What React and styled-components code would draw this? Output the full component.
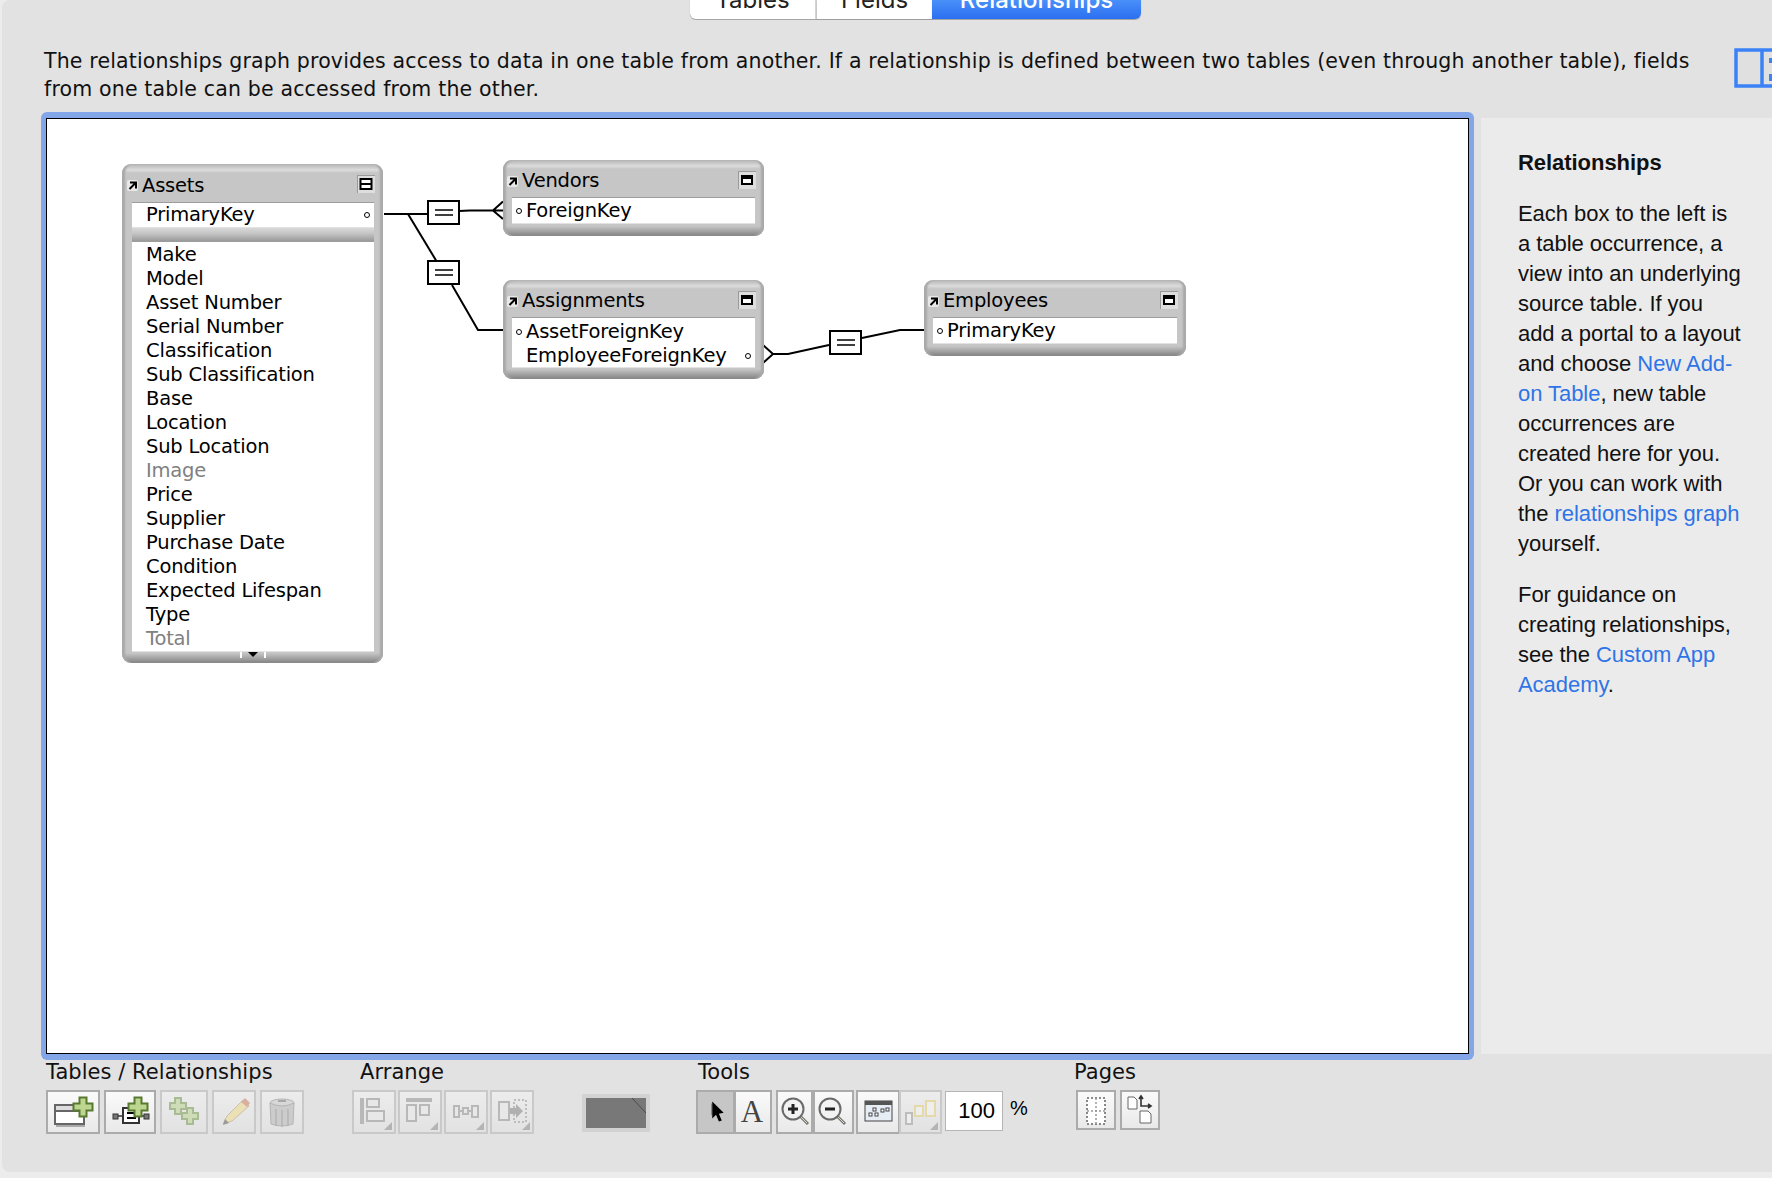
import styled, { createGlobalStyle } from 'styled-components';

const Global = createGlobalStyle`
    html, body {
        margin: 0;
        padding: 0;
        background: #ececec;
    }
`
const GRAPH_FONT = `"DejaVu Sans", "Liberation Sans", sans-serif`;
const HELP_FONT = `"Liberation Sans", Arial, sans-serif`;

const Shell = styled.div`
    width: 1772px;
    height: 1178px;
    overflow: hidden;
    box-sizing: border-box;
    padding: 0 0 6px 2px;
    background: #ececec;
`
const Page = styled.div`
    height: 100%;
    display: flex;
    flex-direction: column;
    background: #e2e2e2;
    border-radius: 8px 0 0 8px;
    color: #000;
`
const TabBar = styled.div`
    height: 20px;
    display: flex;
    align-items: flex-start;
    padding-left: 688px;
    overflow: hidden;
    flex-shrink: 0;
`
const Tab = styled.div`
    width: ${p => p.$w}px;
    height: 19px;
    box-sizing: border-box;
    display: flex;
    align-items: flex-end;
    justify-content: center;
    font: ${p => p.$active ? 500 : 400} 24px/28px Inter, ${HELP_FONT};
    color: ${p => p.$active ? '#fff' : '#222'};
    background: ${p => p.$active ? 'linear-gradient(#4a90fa, #2a6ff0)' : '#fff'};
    border-right: ${p => p.$first ? '2px solid #d4d4d4' : 0};
    border-radius: 0 0 ${p => p.$active ? 6 : 0}px ${p => p.$first ? 6 : 0}px;
    box-shadow: 0 1px 1px rgba(0, 0, 0, 0.3);
    padding-bottom: 5px;
`
const IntroRow = styled.div`
    height: 92px;
    display: flex;
    padding-left: 42px;
    flex-shrink: 0;
`
const Intro = styled.div`
    width: 1690px;
    margin-top: 27px;
    font: 20.5px/28px ${GRAPH_FONT};
    letter-spacing: 0.165px;
    white-space: nowrap;
    color: #111;
`
const SplitToggle = styled.div`
    margin-top: 28px;
    width: 38px;
    height: 40px;
    flex-shrink: 0;
`
const MainRow = styled.div`
    display: flex;
    padding-left: 39px;
    height: 948px;
    flex-shrink: 0;
`
const CanvasFrame = styled.div`
    width: 1433px;
    box-sizing: border-box;
    padding: 6px 5px;
    background: #82a6e8;
    border-radius: 6px;
    display: flex;
`
const Canvas = styled.div`
    flex: 1;
    position: relative;
    background: #fff;
    border: 1px solid #000;
`
const Links = styled.svg`
    position: absolute;
    left: 0;
    top: 0;
`
const Node = styled.div`
    position: absolute;
    left: ${p => p.$x}px;
    top: ${p => p.$y}px;
    width: ${p => p.$w}px;
    height: ${p => p.$h}px;
    box-sizing: border-box;
    padding: 0 9px 0 ${p => p.$pl || 9}px;
    display: flex;
    flex-direction: column;
    border-radius: 9px;
    background: linear-gradient(#b4b4b4 0, #dcdcdc 6px, #c6c6c6 9px, #c6c6c6 calc(100% - 10px), #828282 100%);
    box-shadow: inset 4px 0 2px -1px #a9a9a9, inset -4px 0 2px -1px #a9a9a9;
    font: 19.5px ${GRAPH_FONT};
    letter-spacing: -0.2px;
`
const TitleBar = styled.div`
    height: ${p => p.$h}px;
    flex-shrink: 0;
    margin: 0 -1px 0 -5px;
    padding-top: ${p => p.$pad}px;
    box-sizing: border-box;
    display: flex;
    align-items: center;
    gap: 4px;
`
const TitleText = styled.span`
    flex: 1;
    line-height: 22px;
`
const CollapseBox = styled.svg`
    flex-shrink: 0;
    margin-top: -3px;
`
const FieldBox = styled.div`
    background: #fff;
    box-sizing: border-box;
    height: ${p => p.$h}px;
    flex-shrink: 0;
    padding-top: ${p => p.$pad || 0}px;
    border-top: 1px solid #9d9d9d;
    border-bottom: 1px solid #e2e2e2;
`
const Row = styled.div`
    height: 24px;
    line-height: 24px;
    display: flex;
    align-items: center;
    color: ${p => p.$muted ? '#808080' : '#000'};
`
const DotSlot = styled.div`
    width: 14px;
    flex-shrink: 0;
    display: flex;
    justify-content: center;
    padding-right: 1px;
    box-sizing: border-box;
`
const Dot = styled.span`
    width: 6px;
    height: 6px;
    box-sizing: border-box;
    border: 1.6px solid #000;
    border-radius: 50%;
    display: block;
    margin-right: ${p => p.$right ? 4 : 0}px;
    margin-left: ${p => p.$right ? 'auto' : 0};
`
const Divider = styled.div`
    height: 13px;
    flex-shrink: 0;
    background: linear-gradient(#d8d8d8 0, #c6c6c6 40%, #9a9a9a 100%);
`
const ScrollFoot = styled.div`
    display: flex;
    justify-content: center;
    height: 6px;
    flex-shrink: 0;
`
const Toolbar = styled.div`
    display: flex;
    padding-left: 44px;
    flex: 1;
`
const Group = styled.div`
    margin-left: ${p => p.$ml || 0}px;
    width: ${p => p.$w}px;
    flex-shrink: 0;
`
const GroupLabel = styled.div`
    height: 30px;
    padding-top: 1px;
    box-sizing: border-box;
    margin-left: ${p => p.$ml || 0}px;
    font: 21px/22px ${GRAPH_FONT};
    letter-spacing: 0.05px;
    white-space: nowrap;
    color: #111;
`
const Buttons = styled.div`
    display: flex;
    align-items: flex-start;
`
const IconButton = styled.div`
    width: ${p => p.$w}px;
    height: ${p => p.$h || 44}px;
    margin-left: ${p => p.$ml || 0}px;
    box-sizing: border-box;
    border: 2px solid ${p => p.$off ? '#c9c9c9' : '#ababab'};
    background: ${p => p.$selected ? '#c6c6c6' : p.$off ? 'linear-gradient(#ececec, #e2e2e2)' : 'linear-gradient(#fafafa, #e9e9e9)'};
    display: flex;
    flex-shrink: 0;
`
const Swatch = styled.div`
    width: 68px;
    height: 38px;
    margin-top: 34px;
    box-sizing: border-box;
    border: 4px solid #d2d2d2;
    background: #787878;
    display: flex;
    justify-content: flex-end;
`
const ZoomField = styled.div`
    width: 58px;
    height: 40px;
    margin-left: 3px;
    margin-top: 1px;
    box-sizing: border-box;
    border: 1px solid #b5b5b5;
    background: #fff;
    text-align: right;
    padding-right: 7px;
    font: 22px/38px ${HELP_FONT};
    flex-shrink: 0;
`
const Percent = styled.div`
    margin-left: 7px;
    font: 20px/36px ${HELP_FONT};
    flex-shrink: 0;
`
const Help = styled.aside`
    flex: 1;
    margin: 6px 0 6px 7px;
    background: #ebebeb;
    padding: 30px 0 0 37px;
    font: 22px/30px ${HELP_FONT};
    letter-spacing: -0.05px;
    color: #111;
`
const HelpTitle = styled.div`
    font-weight: 700;
    margin-bottom: 21px;
`
const HelpPara = styled.p`
    margin: 0 0 21px;
    width: 227px;
`
const HelpLink = styled.span`
    color: #2f74e6;
`

const Corner = () => <polygon points="0,8 8,8 8,0" fill="#b4b4b4" />;

const Plus = ({ cx, cy, a = 3.5, b = 9.5, fill = '#bcd68f', stroke = '#587a30' }) => (
    <polygon
        points={`${cx - a},${cy - b} ${cx + a},${cy - b} ${cx + a},${cy - a} ${cx + b},${cy - a} ${cx + b},${cy + a} ${cx + a},${cy + a} ${cx + a},${cy + b} ${cx - a},${cy + b} ${cx - a},${cy + a} ${cx - b},${cy + a} ${cx - b},${cy - a} ${cx - a},${cy - a}`}
        fill={fill}
        stroke={stroke}
        strokeWidth="2"
    />
);

const Icon = ({ w, h = 40, children }) => (
    <svg width={w} height={h} viewBox={`0 0 ${w} ${h}`}>{children}</svg>
);

const AliasArrow = () => (
    <svg width="11" height="11" viewBox="0 0 11 11" style={{ flexShrink: 0 }}>
        <rect width="11" height="11" rx="2" fill="#e8e8e8" />
        <path d="M3 2.5h6v6M8.5 3L2.5 9" stroke="#000" strokeWidth="2" fill="none" />
    </svg>
);

const Collapse = ({ split }) => (
    <CollapseBox width="18" height="18" viewBox="0 0 18 18">
        <rect width="18" height="18" fill="#dedede" />
        <rect x="0" y="0" width="18" height="1" fill="#9a9a9a" />
        <rect x="0" y="0" width="1" height="18" fill="#9a9a9a" />
        {split ? (
            <>
                <rect x="3.5" y="4" width="11" height="10" fill="#fff" stroke="#000" strokeWidth="2" />
                <rect x="3.5" y="8" width="11" height="2" fill="#000" />
            </>
        ) : (
            <>
                <rect x="3" y="4" width="12" height="10" fill="#000" />
                <rect x="5" y="8" width="8" height="4" fill="#fff" />
            </>
        )}
    </CollapseBox>
);

const EqBox = ({ x, y }) => (
    <g>
        <rect x={x + 1} y={y + 1} width="31" height="23" fill="#fff" stroke="#000" strokeWidth="2" />
        <path d={`M${x + 8} ${y + 10}h18M${x + 8} ${y + 15}h18`} stroke="#000" strokeWidth="1.7" />
    </g>
);

const GraphLinks = () => (
    <Links width="1421" height="934" viewBox="47 119 1421 934">
        <g fill="none" stroke="#000" strokeWidth="2">
            <path d="M384 214H427" />
            <path d="M459 211L470 210.5H503M503 201.5L493 210.5L503 219" />
            <path d="M408 214L437 262" />
            <path d="M452 285L478 330H503" />
            <path d="M763 345L773 354L763 363M773 354H788L829 345" />
            <path d="M862 338L900 330H924" />
        </g>
        <EqBox x={427} y={200} />
        <EqBox x={427} y={260} />
        <EqBox x={829} y={330} />
    </Links>
);

const assetFields = [
    'Make', 'Model', 'Asset Number', 'Serial Number', 'Classification', 'Sub Classification',
    'Base', 'Location', 'Sub Location', 'Image', 'Price', 'Supplier', 'Purchase Date',
    'Condition', 'Expected Lifespan', 'Type', 'Total',
];
const mutedFields = ['Image', 'Total'];

const Field = ({ name, left, right, muted }) => (
    <Row $muted={muted}>
        <DotSlot>{left && <Dot />}</DotSlot>
        {name}
        {right && <Dot $right />}
    </Row>
);

const Title = ({ name, split, h, pad }) => (
    <TitleBar $h={h} $pad={pad}>
        <AliasArrow />
        <TitleText>{name}</TitleText>
        <Collapse split={split} />
    </TitleBar>
);

const Graph = () => (
    <Canvas>
        <GraphLinks />
        <Node $x={75} $y={45} $w={261} $h={499} $pl={10}>
            <Title name="Assets" split h={38} pad={5} />
            <FieldBox $h={26}>
                <Field name="PrimaryKey" right />
            </FieldBox>
            <Divider />
            <FieldBox $h={411} $pad={1}>
                {assetFields.map((f) => (
                    <Field key={f} name={f} muted={mutedFields.includes(f)} />
                ))}
            </FieldBox>
            <ScrollFoot>
                <svg width="26" height="6" viewBox="0 0 26 6">
                    <path d="M1 0v6M25 0v6" stroke="#fff" strokeWidth="2" />
                    <polygon points="8,0 18,0 13,5" fill="#000" />
                </svg>
            </ScrollFoot>
        </Node>
        <Node $x={456} $y={41} $w={261} $h={76}>
            <Title name="Vendors" h={37} pad={5} />
            <FieldBox $h={27} $pad={1}>
                <Field name="ForeignKey" left />
            </FieldBox>
        </Node>
        <Node $x={456} $y={161} $w={261} $h={99}>
            <Title name="Assignments" h={37} pad={5} />
            <FieldBox $h={51} $pad={2}>
                <Field name="AssetForeignKey" left />
                <Field name="EmployeeForeignKey" right />
            </FieldBox>
        </Node>
        <Node $x={877} $y={161} $w={262} $h={76}>
            <Title name="Employees" h={37} pad={5} />
            <FieldBox $h={27} $pad={1}>
                <Field name="PrimaryKey" left />
            </FieldBox>
        </Node>
    </Canvas>
);

const TablesButtons = () => (
    <Buttons>
        <IconButton $w={54}>
            <Icon w={50}>
                <rect x="7" y="13" width="29" height="19" fill="#fff" stroke="#666" strokeWidth="2" />
                <rect x="7" y="13" width="29" height="6" fill="#ddd" stroke="#666" strokeWidth="2" />
                <path d="M8 34h29" stroke="#aaa" strokeWidth="2" />
                <Plus cx={35} cy={15} />
            </Icon>
        </IconButton>
        <IconButton $w={52} $ml={4}>
            <Icon w={48}>
                <rect x="7" y="22" width="5" height="5" fill="#777" stroke="#333" />
                <rect x="38" y="22" width="5" height="5" fill="#777" stroke="#333" />
                <path d="M12 24h6M32 24h6" stroke="#333" strokeWidth="1.5" />
                <rect x="17" y="16" width="16" height="15" fill="#fff" stroke="#333" strokeWidth="2" />
                <path d="M21 21h9M21 26h9" stroke="#000" strokeWidth="2" />
                <Plus cx={32} cy={15} />
            </Icon>
        </IconButton>
        <IconButton $w={48} $ml={4} $off>
            <Icon w={44}>
                <Plus cx={16} cy={14} a={3} b={8} fill="#cfdcb8" stroke="#a9bb92" />
                <Plus cx={28} cy={24} a={3} b={8} fill="#cfdcb8" stroke="#a9bb92" />
            </Icon>
        </IconButton>
        <IconButton $w={44} $ml={4} $off>
            <Icon w={40}>
                <polygon points="9,32 13,24 29,8 35,14 18,29" fill="#ebdfb6" stroke="#c9c2a8" />
                <polygon points="27,10 31,6 36,11 33,15" fill="#d8b0a0" />
                <polygon points="9,33 11,27 15,31" fill="#999" />
            </Icon>
        </IconButton>
        <IconButton $w={44} $ml={4} $off>
            <Icon w={40}>
                <ellipse cx="20" cy="11" rx="12" ry="4" fill="#d8d8d8" stroke="#b5b5b5" />
                <path d="M8 11l1 21q11 4 22 0l1-21q-12 6-24 0" fill="#cccccc" stroke="#b5b5b5" />
                <path d="M14 17v17M20 18v17M26 17v17" stroke="#a9a9a9" />
                <path d="M16 9h8" stroke="#999" strokeWidth="1.5" />
            </Icon>
        </IconButton>
    </Buttons>
);

const ArrangeCorner = () => (
    <g transform="translate(30 30)"><Corner /></g>
);

const ArrangeButtons = () => (
    <Buttons>
        <IconButton $w={44} $off>
            <Icon w={40}>
                <rect x="6" y="6" width="4" height="26" fill="#b8b8b8" />
                <rect x="13" y="7" width="12" height="8" fill="#e8e8e8" stroke="#b8b8b8" strokeWidth="2" />
                <rect x="13" y="19" width="17" height="10" fill="#e8e8e8" stroke="#b8b8b8" strokeWidth="2" />
                <ArrangeCorner />
            </Icon>
        </IconButton>
        <IconButton $w={44} $ml={2} $off>
            <Icon w={40}>
                <rect x="6" y="6" width="26" height="4" fill="#b8b8b8" />
                <rect x="7" y="13" width="9" height="16" fill="#e8e8e8" stroke="#b8b8b8" strokeWidth="2" />
                <rect x="20" y="13" width="9" height="10" fill="#e8e8e8" stroke="#b8b8b8" strokeWidth="2" />
                <ArrangeCorner />
            </Icon>
        </IconButton>
        <IconButton $w={44} $ml={2} $off>
            <Icon w={40}>
                <rect x="8" y="14" width="5" height="11" fill="#e8e8e8" stroke="#b8b8b8" strokeWidth="2" />
                <rect x="17" y="16" width="5" height="6" fill="#e8e8e8" stroke="#b8b8b8" strokeWidth="2" />
                <rect x="26" y="14" width="6" height="11" fill="#e8e8e8" stroke="#b8b8b8" strokeWidth="2" />
                <path d="M13 19h4M22 19h4" stroke="#b8b8b8" strokeWidth="2" />
                <ArrangeCorner />
            </Icon>
        </IconButton>
        <IconButton $w={44} $ml={2} $off>
            <Icon w={40}>
                <rect x="7" y="10" width="10" height="18" fill="#e8e8e8" stroke="#b8b8b8" strokeWidth="2" />
                <rect x="22" y="8" width="12" height="22" fill="none" stroke="#bdbdbd" strokeWidth="2" strokeDasharray="2 2" />
                <polygon points="18,16 24,16 24,12 31,19 24,26 24,22 18,22" fill="#b0b0b0" />
                <ArrangeCorner />
            </Icon>
        </IconButton>
    </Buttons>
);

const Magnifier = ({ minus }) => (
    <Icon w={33}>
        <path d="M22 24l8 8" stroke="#777" strokeWidth="3" />
        <path d="M23 25l6 6" stroke="#e0d8b8" strokeWidth="1" />
        <circle cx="15" cy="17" r="10.5" fill="#f2f2f2" stroke="#6a6a6a" strokeWidth="2" />
        <path d={minus ? 'M10 17h10' : 'M10 17h10M15 12v10'} stroke="#222" strokeWidth="3" />
    </Icon>
);

const ToolButtons = () => (
    <Buttons>
        <IconButton $w={39} $selected>
            <Icon w={35}>
                <polygon points="13,11 13,24 14,22 14,12" fill="#888" />
                <path d="M15 11l0 18 4-4 3 7 3-1-3-7 5-1z" fill="#000" transform="translate(0 -1) scale(0.95)" />
            </Icon>
        </IconButton>
        <IconButton $w={38} $ml={-1}>
            <Icon w={34}>
                <text x="16" y="30" textAnchor="middle" fontFamily="'Liberation Serif', serif" fontSize="31" fill="#444">A</text>
            </Icon>
        </IconButton>
        <IconButton $w={37} $ml={4}>
            <Magnifier />
        </IconButton>
        <IconButton $w={41}>
            <Magnifier minus />
        </IconButton>
        <IconButton $w={44} $ml={2}>
            <Icon w={40}>
                <rect x="7" y="9" width="27" height="20" fill="#e6edf5" stroke="#444" />
                <rect x="7" y="9" width="27" height="4" fill="#555" />
                <g fill="#fff" stroke="#444">
                    <rect x="11" y="21" width="3" height="3" />
                    <rect x="17" y="21" width="3" height="3" />
                    <rect x="23" y="17" width="3" height="3" />
                    <rect x="15" y="16" width="3" height="3" />
                    <rect x="28" y="16" width="3" height="3" />
                </g>
            </Icon>
        </IconButton>
        <IconButton $w={43} $ml={-1} $off>
            <Icon w={39}>
                <rect x="5" y="21" width="6" height="11" fill="#eee" stroke="#bdbdbd" strokeWidth="2" />
                <rect x="14" y="14" width="8" height="10" fill="#eee" stroke="#e6d9a8" strokeWidth="2" />
                <rect x="25" y="9" width="9" height="15" fill="#eee" stroke="#e6d9a8" strokeWidth="2" />
                <g transform="translate(29 30)"><Corner /></g>
            </Icon>
        </IconButton>
    </Buttons>
);

const PageButtons = () => (
    <Buttons>
        <IconButton $w={40} $h={40}>
            <Icon w={36} h={36}>
                <rect x="9" y="6" width="18" height="26" fill="#fff" stroke="#888" strokeWidth="2" strokeDasharray="2 2" />
                <path d="M9 19h18M18 6v26" stroke="#999" strokeWidth="1.5" strokeDasharray="2 2" />
            </Icon>
        </IconButton>
        <IconButton $w={40} $h={40} $ml={4}>
            <Icon w={36} h={36}>
                <path d="M6 5h6l3 3v9H6z" fill="#fff" stroke="#666" />
                <path d="M18 19h8l3 3v9h-11z" fill="#fff" stroke="#666" />
                <path d="M19 4v10h9M17 7l2-3 2 3M26 12l3 2-3 2" fill="none" stroke="#333" strokeWidth="1.6" />
            </Icon>
        </IconButton>
    </Buttons>
);

const App = () => {
    return (
        <>
            <Global />
            <Shell>
                <Page>
                    <TabBar>
                        <Tab $w={127} $first>Tables</Tab>
                        <Tab $w={115}>Fields</Tab>
                        <Tab $w={209} $active>Relationships</Tab>
                    </TabBar>
                    <IntroRow>
                        <Intro>
                            The relationships graph provides access to data in one table from another. If a relationship is defined between two tables (even through another table), fields<br />
                            from one table can be accessed from the other.
                        </Intro>
                        <SplitToggle>
                            <svg width="38" height="40" viewBox="0 0 38 40">
                                <rect x="2" y="2" width="50" height="36" fill="#e0e0e0" stroke="#3b82f6" strokeWidth="3.5" />
                                <path d="M28 2v36" stroke="#3b82f6" strokeWidth="3.5" />
                                <rect x="35" y="10" width="3" height="5" fill="#3b82f6" />
                                <rect x="35" y="26" width="3" height="7" fill="#3b82f6" />
                            </svg>
                        </SplitToggle>
                    </IntroRow>
                    <MainRow>
                        <CanvasFrame>
                            <Graph />
                        </CanvasFrame>
                        <Help>
                            <HelpTitle>Relationships</HelpTitle>
                            <HelpPara>
                                Each box to the left is a table occurrence, a view into an underlying source table. If you add a portal to a layout and choose <HelpLink>New Add-on Table</HelpLink>, new table occurrences are created here for you. Or you can work with the <HelpLink>relationships graph</HelpLink> yourself.
                            </HelpPara>
                            <HelpPara>
                                For guidance on creating relationships, see the <HelpLink>Custom App Academy</HelpLink>.
                            </HelpPara>
                        </Help>
                    </MainRow>
                    <Toolbar>
                        <Group $w={306}>
                            <GroupLabel>Tables / Relationships</GroupLabel>
                            <TablesButtons />
                        </Group>
                        <Group $w={230}>
                            <GroupLabel $ml={8}>Arrange</GroupLabel>
                            <ArrangeButtons />
                        </Group>
                        <Swatch>
                            <svg width="14" height="16" viewBox="0 0 14 16">
                                <path d="M0 0L14 15" stroke="#4a4a4a" strokeWidth="1" />
                            </svg>
                        </Swatch>
                        <Group $ml={46} $w={380}>
                            <GroupLabel $ml={2}>Tools</GroupLabel>
                            <Buttons>
                                <ToolButtons />
                                <ZoomField>100</ZoomField>
                                <Percent>%</Percent>
                            </Buttons>
                        </Group>
                        <Group $w={100}>
                            <GroupLabel $ml={-2}>Pages</GroupLabel>
                            <PageButtons />
                        </Group>
                    </Toolbar>
                </Page>
            </Shell>
        </>
    );
};

export default App;
